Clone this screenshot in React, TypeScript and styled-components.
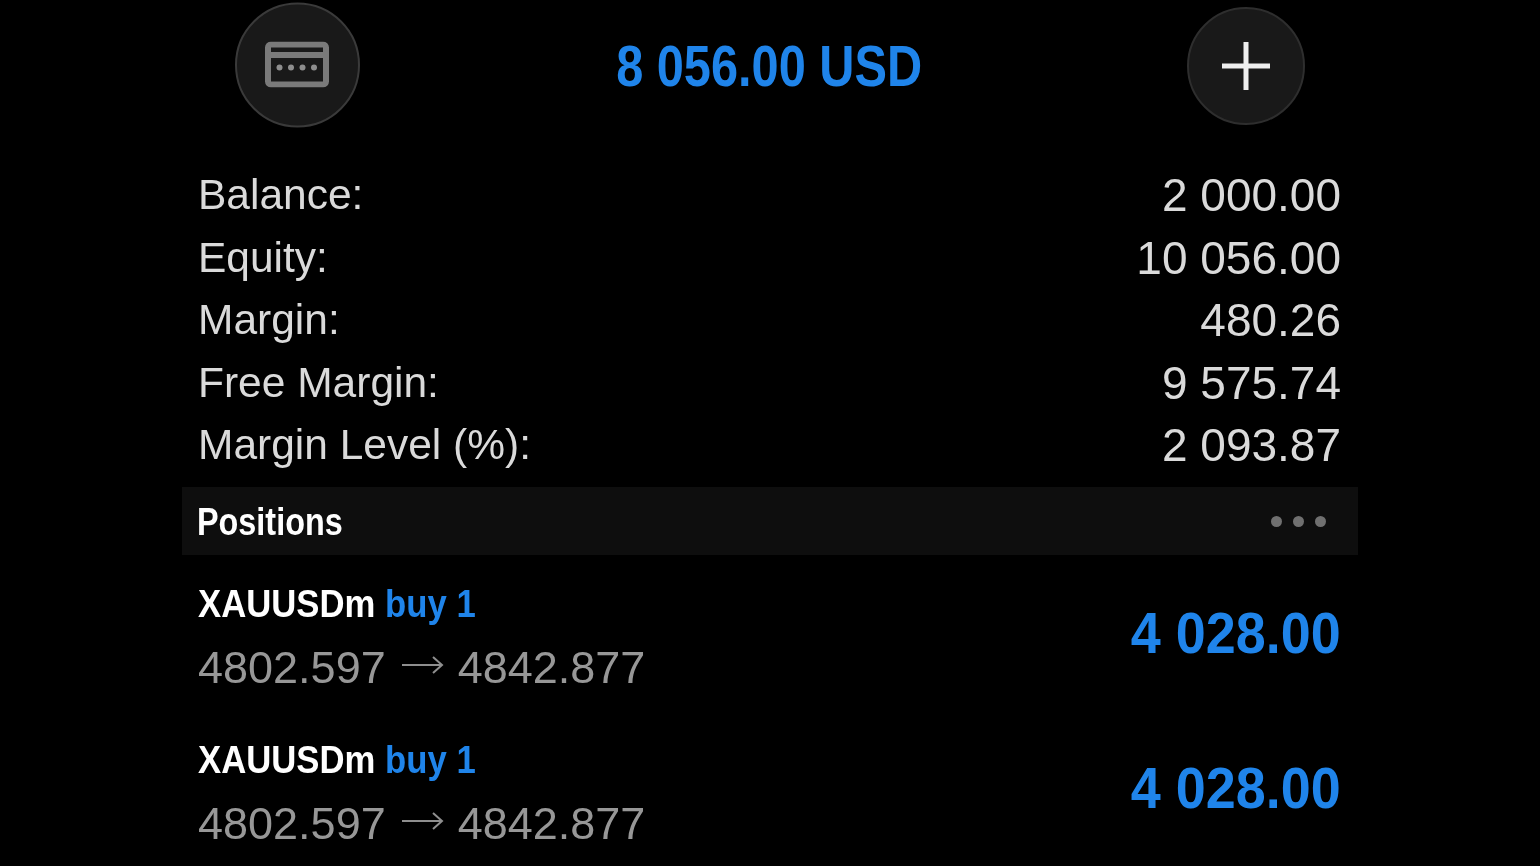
import React from 'react';
import styled, { createGlobalStyle } from 'styled-components';

const GlobalStyle = createGlobalStyle`
  html, body {
    margin: 0;
    background: #000;
    overflow: hidden;
  }
`;

const Page = styled.div`
  width: 1540px;
  height: 866px;
  box-sizing: border-box;
  padding: 0 182px;
  background: #000;
  font-family: 'Liberation Sans', Arial, sans-serif;
  overflow: hidden;
  filter: blur(0.6px);
`;

const Header = styled.header`
  height: 132px;
  display: grid;
  grid-template-columns: 240px 1fr 240px;
  align-items: center;
  justify-items: center;
`;

const RoundButton = styled.div<{ $size: number; $shiftX: number; $shiftY: number; $edge: string }>`
  width: ${(p) => p.$size}px;
  height: ${(p) => p.$size}px;
  box-sizing: border-box;
  border-radius: 50%;
  background: #191919;
  border: 2px solid ${(p) => p.$edge};
  display: flex;
  align-items: center;
  justify-content: center;
  transform: translate(${(p) => p.$shiftX}px, ${(p) => p.$shiftY}px);
`;

// the app's condensed face isn't installed, so the bold is squeezed to its widths
const Condensed = styled.span<{ $scale: number; $origin: string }>`
  display: inline-block;
  font-weight: 700;
  white-space: nowrap;
  transform: scaleX(${(p) => p.$scale});
  transform-origin: ${(p) => p.$origin} center;
`;

const Total = styled.div`
  font-size: 58px;
  line-height: 64px;
  color: #1f84ea;
  transform: translateX(-1px);
`;

const Summary = styled.section`
  display: flex;
  flex-direction: column;
  padding: 32px 17px 0 16px;
`;

const SummaryRow = styled.div`
  height: 62.5px;
  display: flex;
  justify-content: space-between;
  align-items: center;
  color: #dadada;
`;

const Label = styled.span`
  font-size: 42.5px;
`;

const Value = styled.span`
  font-size: 46px;
`;

const SectionBar = styled.div`
  height: 68px;
  margin-top: 10px;
  display: flex;
  align-items: center;
  justify-content: space-between;
  padding: 0 32px 0 15px;
  background: #0e0e0e;
`;

const SectionTitle = styled.div`
  font-size: 39px;
  color: #fff;
  padding-top: 2px;
`;

const Dots = styled.div`
  display: flex;
  gap: 11px;
  padding-top: 2px;
`;

const Dot = styled.span`
  width: 11px;
  height: 11px;
  border-radius: 50%;
  background: #707070;
`;

const PositionRow = styled.div`
  height: 155.5px;
  display: flex;
  align-items: center;
  justify-content: space-between;
  padding: 0 17px 0 16px;
`;

const PositionInfo = styled.div`
  display: flex;
  flex-direction: column;
  gap: 14px;
  padding-top: 8px;
`;

const SymbolLine = styled.div`
  font-size: 39px;
  line-height: 50px;
  color: #fff;
`;

const Side = styled.span`
  color: #1f84ea;
`;

const Prices = styled.div`
  display: flex;
  align-items: center;
  gap: 14px;
  font-size: 45px;
  line-height: 50px;
  color: #979797;
`;

const Amount = styled.div`
  font-size: 58px;
  color: #1f84ea;
`;

const rows = [
  ['Balance:', '2 000.00'],
  ['Equity:', '10 056.00'],
  ['Margin:', '480.26'],
  ['Free Margin:', '9 575.74'],
  ['Margin Level (%):', '2 093.87'],
];

const CardIcon = () => (
  <svg width="64" height="46" viewBox="0 0 64 46" fill="none">
    <rect x="3" y="3" width="58" height="40" rx="3" stroke="#7a7a7a" stroke-width="6" />
    <rect x="2" y="10.500" width="60" height="6" fill="#7a7a7a" />
    <circle cx="14.500" cy="26" r="3" fill="#8e8e8e" />
    <circle cx="26" cy="26" r="3" fill="#8e8e8e" />
    <circle cx="37.500" cy="26" r="3" fill="#8e8e8e" />
    <circle cx="49" cy="26" r="3" fill="#8e8e8e" />
  </svg>
);

const PlusIcon = () => (
  <svg width="50" height="50" viewBox="0 0 50 50">
    <path d="M25 1V49M1 25H49" stroke="#eee" stroke-width="5" fill="none" />
  </svg>
);

const ArrowIcon = () => (
  <svg width="44" height="24" viewBox="0 0 44 24" fill="none">
    <path d="M2 9H42M33 1L42 9L33 17" stroke="#8e8e8e" stroke-width="2" />
  </svg>
);

const Position = () => (
  <PositionRow>
    <PositionInfo>
      <SymbolLine>
        <Condensed $scale={0.89} $origin="left">
          XAUUSDm <Side>buy 1</Side>
        </Condensed>
      </SymbolLine>
      <Prices>
        4802.597 <ArrowIcon /> 4842.877
      </Prices>
    </PositionInfo>
    <Amount>
      <Condensed $scale={0.93} $origin="right">4 028.00</Condensed>
    </Amount>
  </PositionRow>
);

const App: React.FC = () => (
  <Page>
    <GlobalStyle />
    <Header>
      <RoundButton $size={125} $shiftX={-5} $shiftY={-1.5} $edge="#3a3a3a">
        <CardIcon />
      </RoundButton>
      <Total>
        <Condensed $scale={0.84} $origin="center">8 056.00 USD</Condensed>
      </Total>
      <RoundButton $size={118} $shiftX={8} $shiftY={0} $edge="#2e2e2e">
        <PlusIcon />
      </RoundButton>
    </Header>
    <Summary>
      {rows.map(([label, value]) => (
        <SummaryRow key={label}>
          <Label>{label}</Label>
          <Value>{value}</Value>
        </SummaryRow>
      ))}
    </Summary>
    <SectionBar>
      <SectionTitle>
        <Condensed $scale={0.83} $origin="left">Positions</Condensed>
      </SectionTitle>
      <Dots>
        <Dot />
        <Dot />
        <Dot />
      </Dots>
    </SectionBar>
    <Position />
    <Position />
  </Page>
);

export default App;
